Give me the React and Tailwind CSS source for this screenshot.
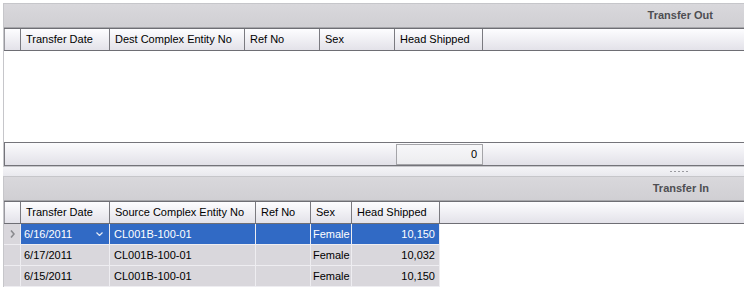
const hdrCell = 'h-full flex items-center pl-[5px] border-r border-[#7a7a80] bg-linear-to-b from-[#fdfdff] to-[#e3e2e9] shrink-0'

const outCols = [
  { w: 'w-[89px]', label: 'Transfer Date' },
  { w: 'w-[135px]', label: 'Dest Complex Entity No' },
  { w: 'w-[75px]', label: 'Ref No' },
  { w: 'w-[75px]', label: 'Sex' },
  { w: 'w-[88px]', label: 'Head Shipped' },
]

const inCols = [
  { w: 'w-[89px]', label: 'Transfer Date' },
  { w: 'w-[146px]', label: 'Source Complex Entity No' },
  { w: 'w-[55px]', label: 'Ref No' },
  { w: 'w-[41px]', label: 'Sex' },
  { w: 'w-[88px]', label: 'Head Shipped' },
]

const rows = [
  { date: '6/16/2011', src: 'CL001B-100-01', ref: '', sex: 'Female', head: '10,150', sel: true },
  { date: '6/17/2011', src: 'CL001B-100-01', ref: '', sex: 'Female', head: '10,032' },
  { date: '6/15/2011', src: 'CL001B-100-01', ref: '', sex: 'Female', head: '10,150' },
]

function TitleBar({ title, pad }) {
  return (
    <div className={`h-[24px] flex items-center justify-end ${pad} bg-linear-to-b from-[#d9d8dc] to-[#d0cfd3] border-b border-[#a6a6aa]`}>
      <span className="text-[11px] font-bold text-[#4e4e52]">{title}</span>
    </div>
  )
}

function Header({ cols }) {
  return (
    <div className="h-[23px] flex border-t border-b border-[#6e6e74] bg-linear-to-b from-[#fdfdff] to-[#e3e2e9]">
      <div className={`${hdrCell} w-[17px] border-l border-l-[#9a9aa0]`} />
      {cols.map((c) => (
        <div key={c.label} className={`${hdrCell} ${c.w}`}>{c.label}</div>
      ))}
      <div className="flex-1" />
    </div>
  )
}

function Row({ r }) {
  const bg = r.sel ? 'bg-[#316ac5] text-white' : 'bg-[#d9d7dc] text-black'
  const cell = `h-full flex items-center border-r border-[#eeedf1] shrink-0 ${bg}`
  return (
    <div className="h-[21px] flex w-[436px] border-b border-[#eeedf1]">
      <div className="w-[17px] h-full flex items-center justify-center bg-[#d9d7dc] border-r border-[#eeedf1] shrink-0">
        {r.sel && (
          <svg width="5" height="8" viewBox="0 0 5 8">
            <path d="M1 0.5 L4 4 L1 7.5" fill="none" stroke="#8a8a8e" strokeWidth="1.6" />
          </svg>
        )}
      </div>
      <div className={`${cell} w-[89px] pl-[3px] justify-between pr-[6px]`}>
        <span>{r.date}</span>
        {r.sel && (
          <svg width="7" height="4" viewBox="0 0 7 4">
            <path d="M0.5 0.5 L3.5 3.5 L6.5 0.5" fill="none" stroke="#e8ecf6" strokeWidth="1.2" />
          </svg>
        )}
      </div>
      <div className={`${cell} w-[146px] pl-[4px]`}>{r.src}</div>
      <div className={`${cell} w-[55px] pl-[3px]`}>{r.ref}</div>
      <div className={`${cell} w-[41px] pl-[2px]`}>{r.sex}</div>
      <div className={`${cell} w-[88px] justify-end pr-[4px]`}>{r.head}</div>
    </div>
  )
}

export default function App() {
  return (
    <div className="w-[744px] h-[292px] overflow-hidden bg-white pt-[3px] pl-[3px] text-[11px] text-black font-['Liberation_Sans',Arial,sans-serif]">
      {/* Transfer Out */}
      <div className="h-[164px] border-l border-t border-b border-[#c6c6ca] flex flex-col">
        <TitleBar title="Transfer Out" pad="pr-[31px]" />
        <Header cols={outCols} />
        <div className="h-[91px] bg-white" />
        <div className="h-[24px] border-t border-b border-l border-[#74747a] bg-linear-to-b from-[#fbfbfd] to-[#e2e1e8] flex items-center">
          <div className="ml-[391px] w-[87px] h-[21px] border border-[#a4a4a8] bg-linear-to-b from-[#f7f7f9] to-[#ececef] flex items-center justify-end pr-[5px]">
            0
          </div>
        </div>
      </div>

      {/* splitter */}
      <div className="h-[10px] border-b border-[#c6c6ca] bg-linear-to-b from-[#f4f4f7] to-[#e9e9ee] flex items-center justify-end pr-[56px]">
        <div className="flex gap-[2px]">
          {[0, 1, 2, 3, 4].map((i) => (
            <span key={i} className="w-[2px] h-[1px] bg-[#9a9aa0]" />
          ))}
        </div>
      </div>

      {/* Transfer In */}
      <div className="border-l border-[#c6c6ca] flex flex-col">
        <TitleBar title="Transfer In" pad="pr-[35px]" />
        <Header cols={inCols} />
        {rows.map((r, i) => (
          <Row key={i} r={r} />
        ))}
      </div>
    </div>
  )
}
